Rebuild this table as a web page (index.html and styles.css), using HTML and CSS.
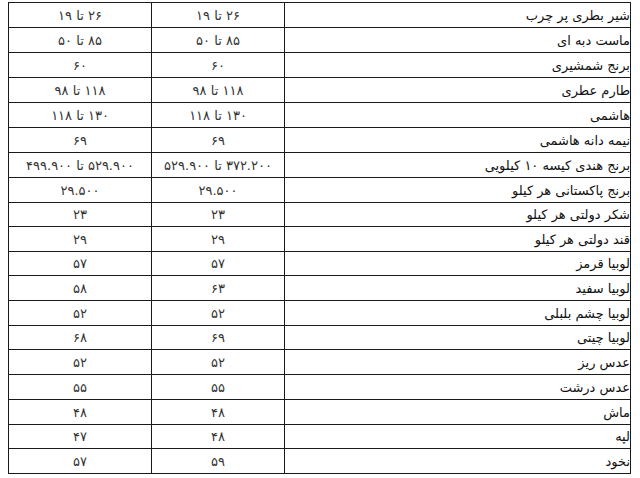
FILE: index.html
```html
<!DOCTYPE html>
<html lang="fa" dir="rtl">
<head>
<meta charset="utf-8">
<link rel="stylesheet" href="styles.css">
</head>
<body>
<table class="prices">
<colgroup><col class="c-name"><col class="c-mid"><col class="c-left"></colgroup>
<tr class="cut"><td></td><td></td><td></td></tr>
<tr><td class="name">شیر بطری پر چرب</td><td class="num">۲۶ تا ۱۹</td><td class="num">۲۶ تا ۱۹</td></tr>
<tr><td class="name">ماست دبه ای</td><td class="num">۸۵ تا ۵۰</td><td class="num">۸۵ تا ۵۰</td></tr>
<tr><td class="name">برنج شمشیری</td><td class="num">۶۰</td><td class="num">۶۰</td></tr>
<tr><td class="name">طارم عطری</td><td class="num">۱۱۸ تا ۹۸</td><td class="num">۱۱۸ تا ۹۸</td></tr>
<tr><td class="name">هاشمی</td><td class="num">۱۳۰ تا ۱۱۸</td><td class="num">۱۳۰ تا ۱۱۸</td></tr>
<tr><td class="name">نیمه دانه هاشمی</td><td class="num">۶۹</td><td class="num">۶۹</td></tr>
<tr><td class="name">برنج هندی کیسه ۱۰ کیلویی</td><td class="num">۳۷۲.۲۰۰ تا ۵۲۹.۹۰۰</td><td class="num">۵۲۹.۹۰۰ تا ۴۹۹.۹۰۰</td></tr>
<tr><td class="name">برنج پاکستانی هر کیلو</td><td class="num">۲۹.۵۰۰</td><td class="num">۲۹.۵۰۰</td></tr>
<tr class="s"><td class="name">شکر دولتی هر کیلو</td><td class="num">۲۳</td><td class="num">۲۳</td></tr>
<tr><td class="name">قند دولتی هر کیلو</td><td class="num">۲۹</td><td class="num">۲۹</td></tr>
<tr class="s"><td class="name">لوبیا قرمز</td><td class="num">۵۷</td><td class="num">۵۷</td></tr>
<tr><td class="name">لوبیا سفید</td><td class="num">۶۳</td><td class="num">۵۸</td></tr>
<tr><td class="name">لوبیا چشم بلبلی</td><td class="num">۵۲</td><td class="num">۵۲</td></tr>
<tr class="s"><td class="name">لوبیا چیتی</td><td class="num">۶۹</td><td class="num">۶۸</td></tr>
<tr><td class="name">عدس ریز</td><td class="num">۵۲</td><td class="num">۵۲</td></tr>
<tr><td class="name">عدس درشت</td><td class="num">۵۵</td><td class="num">۵۵</td></tr>
<tr><td class="name">ماش</td><td class="num">۴۸</td><td class="num">۴۸</td></tr>
<tr class="s"><td class="name">لپه</td><td class="num">۴۸</td><td class="num">۴۷</td></tr>
<tr><td class="name">نخود</td><td class="num">۵۹</td><td class="num">۵۷</td></tr>
</table>
</body>
</html>
```

FILE: styles.css
```css
html, body {
  margin: 0;
  padding: 0;
  background: #ffffff;
}
body {
  padding-top: 2px;
  padding-left: 9px;
  padding-right: 9px;
  font-family: "DejaVu Sans", "Noto Sans", sans-serif;
  overflow: hidden;
}
.prices {
  border-collapse: collapse;
  width: 622px;
  table-layout: fixed;
}
.c-name { width: 346px; }
.c-mid { width: 133px; }
.c-left { width: 143px; }
.prices tr {
  height: 25px;
}
.prices tr.s {
  height: 24px;
}
.prices td {
  border: 1px solid #1a1a1a;
  padding: 0;
  vertical-align: middle;
  white-space: nowrap;
}
.prices tr.cut {
  height: 0;
}
.prices tr.cut td {
  border-top: none;
}
.name {
  text-align: right;
  padding-right: 1px;
  font-size: 13px;
  color: #111;
}
.num {
  text-align: center;
  font-size: 13px;
  color: #333;
}
```
